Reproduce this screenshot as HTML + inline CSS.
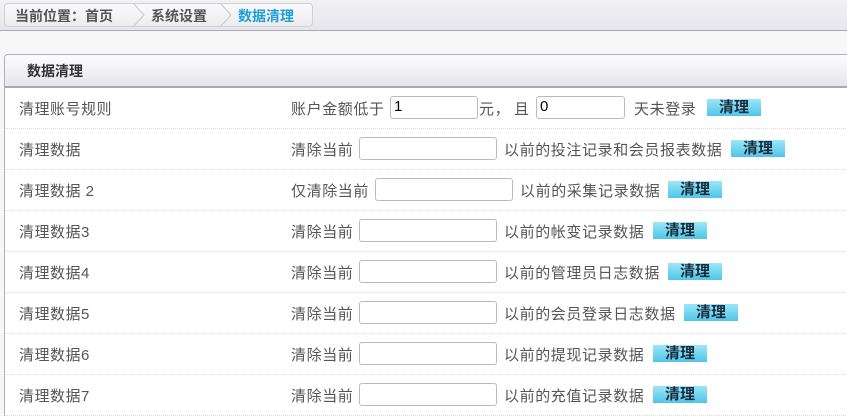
<!DOCTYPE html>
<html><head><meta charset="utf-8"><style>
*{margin:0;padding:0;box-sizing:border-box}
html,body{width:847px;height:416px;overflow:hidden}
body{background:#f7f7f7;font-family:"Liberation Sans","Noto Sans CJK SC",sans-serif;font-size:15px;color:#555;position:relative}
.top{position:absolute;left:0;top:0;width:847px;height:31px;background:linear-gradient(#f2f2f5,#e6e6eb);border-bottom:1px solid #aaa9b8}
.bc{position:absolute;left:4px;top:3px;width:309px;height:24px;border:1px solid #cfcfd6;border-radius:4px;background:linear-gradient(#fbfbfc,#ececf0);font-size:14px;font-weight:bold;color:#555}
.bc span{position:absolute;top:2px;white-space:nowrap}
.arr{position:absolute;top:-1px;width:14px;height:24px}
.panel{position:absolute;left:4px;top:54px;width:843px;height:362px;border:1px solid #b0b0bc;border-right:none;border-bottom:none;border-radius:4px 0 0 0;background:#fff;overflow:hidden}
.hd{height:33px;background:linear-gradient(#fdfdfe,#e6e6ea);border-bottom:2px solid #a9a9b6;font-weight:bold;color:#333;padding:6px 0 0 22px;font-size:14px}
.row{position:absolute;left:0;width:843px;height:41px;border-bottom:1px dotted #ddd}
.row>*{position:absolute;white-space:nowrap}
.l{left:14px;top:10px;letter-spacing:.5px}
.t{top:10px;letter-spacing:.6px}
.in{top:8px;height:23px;border:1px solid #bbb;border-radius:3px;background:#fff;font-size:15px;color:#000;padding:1px 3px}
.btn{top:11px;width:54px;height:17px;background:linear-gradient(#9be7f6,#50c5e9);color:#1a2a3a;font-weight:bold;text-align:center;line-height:17px;font-size:15px}
</style></head><body>
<div class="top"><div class="bc">
<span style="left:10px">当前位置：首页</span>
<svg class="arr" style="left:127px" viewBox="0 0 14 24"><path d="M1 0 L12 12 L1 24" fill="none" stroke="#c8c8d0"/></svg>
<span style="left:146px">系统设置</span>
<svg class="arr" style="left:214px" viewBox="0 0 14 24"><path d="M1 0 L12 12 L1 24" fill="none" stroke="#c8c8d0"/></svg>
<span style="left:233px;color:#1e9ed8">数据清理</span>
</div></div>
<div class="panel"><div class="hd">数据清理</div>
<div class="row" style="top:33px"><span class="l">清理账号规则</span><span class="t" style="left:286px">账户金额低于</span><div class="in" style="left:385px;width:88px">1</div><span class="t" style="left:474px">元，</span><span class="t" style="left:509px">且</span><div class="in" style="left:531px;width:89px">0</div><span class="t" style="left:629px">天未登录</span><div class="btn" style="left:702px">清理</div></div>
<div class="row" style="top:74px"><span class="l">清理数据</span><span class="t" style="left:286px">清除当前</span><div class="in" style="left:354px;width:138px"></div><span class="t" style="left:499px">以前的投注记录和会员报表数据</span><div class="btn" style="left:726px">清理</div></div>
<div class="row" style="top:115px"><span class="l">清理数据 2</span><span class="t" style="left:286px">仅清除当前</span><div class="in" style="left:370px;width:138px"></div><span class="t" style="left:515px">以前的采集记录数据</span><div class="btn" style="left:663px">清理</div></div>
<div class="row" style="top:156px"><span class="l">清理数据3</span><span class="t" style="left:286px">清除当前</span><div class="in" style="left:354px;width:138px"></div><span class="t" style="left:499px">以前的帐变记录数据</span><div class="btn" style="left:648px">清理</div></div>
<div class="row" style="top:197px"><span class="l">清理数据4</span><span class="t" style="left:286px">清除当前</span><div class="in" style="left:354px;width:138px"></div><span class="t" style="left:499px">以前的管理员日志数据</span><div class="btn" style="left:663px">清理</div></div>
<div class="row" style="top:238px"><span class="l">清理数据5</span><span class="t" style="left:286px">清除当前</span><div class="in" style="left:354px;width:138px"></div><span class="t" style="left:499px">以前的会员登录日志数据</span><div class="btn" style="left:679px">清理</div></div>
<div class="row" style="top:279px"><span class="l">清理数据6</span><span class="t" style="left:286px">清除当前</span><div class="in" style="left:354px;width:138px"></div><span class="t" style="left:499px">以前的提现记录数据</span><div class="btn" style="left:648px">清理</div></div>
<div class="row" style="top:320px"><span class="l">清理数据7</span><span class="t" style="left:286px">清除当前</span><div class="in" style="left:354px;width:138px"></div><span class="t" style="left:499px">以前的充值记录数据</span><div class="btn" style="left:648px">清理</div></div>
</div>
</body></html>
